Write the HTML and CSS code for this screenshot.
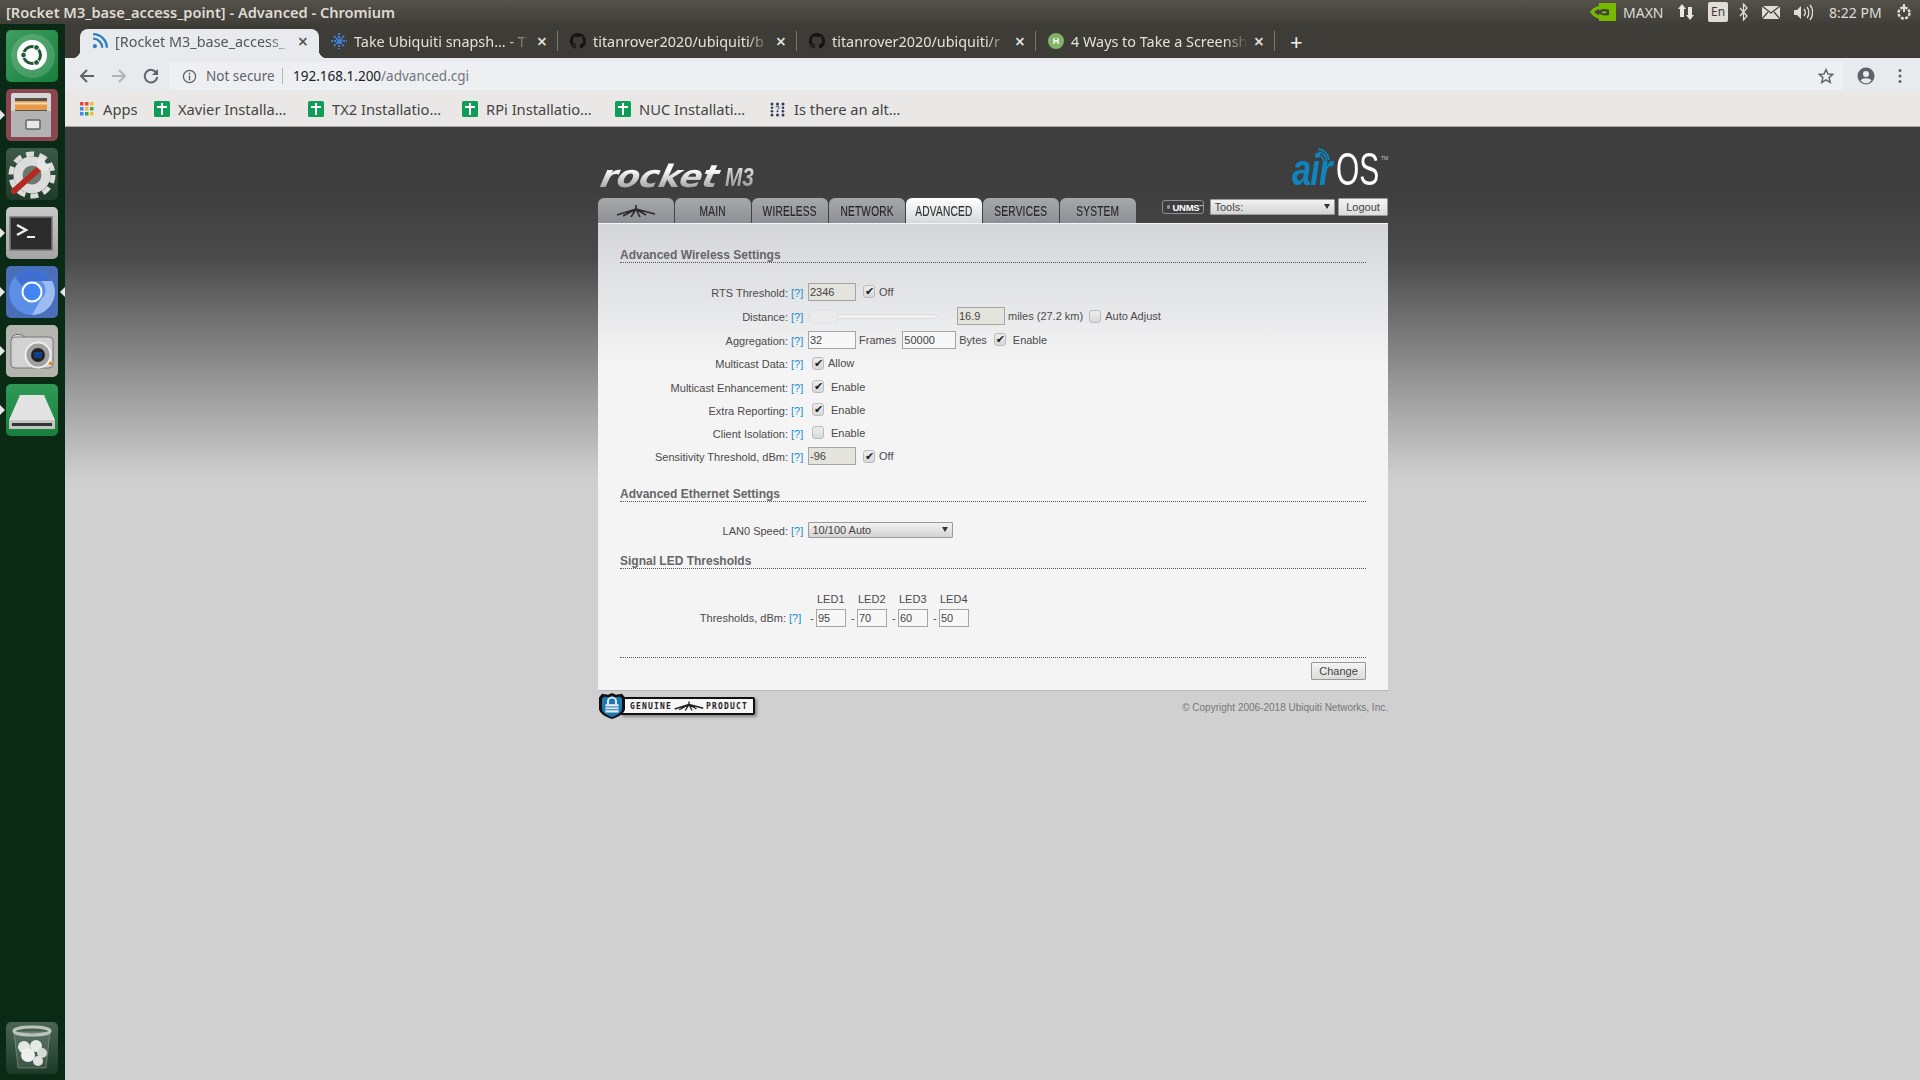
FILE: index.html
```html
<!DOCTYPE html>
<html lang="en">
<head>
    <meta charset="UTF-8">
    <title>[Rocket M3_base_access_point] - Advanced</title>
    <link rel="stylesheet" href="styles.css">
</head>
<body>
    <!-- ubuntu top panel -->
    <div class="panel">
        <div class="win-title">[Rocket M3_base_access_point] - Advanced - Chromium</div>
        <div class="tray">
            <svg class="tray-nv" viewBox="0 0 26 18"><rect x="9" width="17" height="18" fill="#76b900"/><path d="M0 9C4 3 12 1 19 3v3C14 4 8 5 4 9c4 4 9 6 15 4v3C11 18 4 15 0 9z" fill="#76b900"/><path d="M7 9c3-3 8-4 12-2v5c-4 1-9 0-12-3z" fill="#3f3d38"/><path d="M11 9c2-1 5-1 6 0-1 2-4 2-6 0z" fill="#76b900"/></svg>
            <span class="tray-text maxn">MAXN</span>
            <svg class="tray-arrows" viewBox="0 0 18 18"><path d="M5 1l4 5H7v8H3V6H1zM13 17l-4-5h2V4h4v8h2z" fill="#e8e6e0"/></svg>
            <span class="tray-lang">En</span>
            <svg class="tray-bt" viewBox="0 0 9 18"><path d="M1 5l7 8-3.500 4V1L8 5l-7 8" fill="none" stroke="#dfddd6" stroke-width="1.300"/></svg>
            <svg class="tray-mail" viewBox="0 0 18 13"><rect width="18" height="13" fill="#dfddd6"/><path d="M0 0l9 7 9-7M0 13l6-7M18 13l-6-7" fill="none" stroke="#3f3d38" stroke-width="1.200"/></svg>
            <svg class="tray-vol" viewBox="0 0 19 17"><path d="M0 6h3l4-4v13l-4-4H0z" fill="#dfddd6"/><path d="M10 5c1.500 2 1.500 5 0 7M13 3c2.500 3 2.500 8 0 11M16 1c3.500 4 3.500 11 0 15" fill="none" stroke="#dfddd6" stroke-width="1.300"/></svg>
            <span class="tray-text clock">8:22 PM</span>
            <svg class="tray-gear" viewBox="0 0 18 18"><circle cx="9" cy="10" r="5.500" fill="none" stroke="#dfddd6" stroke-width="2.500" stroke-dasharray="3 1.300"/><path d="M9 1v8" stroke="#dfddd6" stroke-width="2"/></svg>
        </div>
    </div>

    <div class="desk">
        <!-- launcher -->
        <nav class="launcher">
            <div class="lnc lnc-ubuntu">
                <svg viewBox="0 0 52 52"><circle cx="27" cy="26" r="22" fill="#ffffff" fill-opacity=".16"/><circle cx="26" cy="25" r="15" fill="#fff"/><circle cx="26" cy="25" r="8.500" fill="none" stroke="#1d5a34" stroke-width="3"/><circle cx="17.500" cy="25" r="2.800" fill="#1d5a34" stroke="#fff"/><circle cx="30.500" cy="17.500" r="2.800" fill="#1d5a34" stroke="#fff"/><circle cx="30.500" cy="32.500" r="2.800" fill="#1d5a34" stroke="#fff"/></svg>
            </div>
            <div class="lnc lnc-files on">
                <svg viewBox="0 0 52 52"><rect x="5" y="4" width="40" height="44" rx="2" fill="#d5d5d5"/><rect x="9" y="9" width="32" height="13" fill="#55524e"/><path d="M9 12h32v9H9z" fill="#e89a4a"/><path d="M9 13.500h32v2H9z" fill="#f6dcae"/><path d="M5 22h40v26H5z" fill="#b3b3b3"/><rect x="20" y="31" width="14" height="9" rx="1" fill="#e8e8e8" stroke="#666" stroke-width="1.500"/></svg>
            </div>
            <div class="lnc lnc-settings">
                <svg viewBox="0 0 52 52"><circle cx="26" cy="27" r="14" fill="#6b7a70" stroke="#dcdcdc" stroke-width="9"/><circle cx="26" cy="27" r="21" fill="none" stroke="#dcdcdc" stroke-width="5" stroke-dasharray="8 5.200"/><path d="M8 43l27-24" stroke="#b52a20" stroke-width="6" stroke-linecap="round"/><path d="M33 21l5-6" stroke="#e6e6e6" stroke-width="6"/><path d="M33 9a9 9 0 0 0 8 14l4-8-6 1-1-6z" fill="#e6e6e6"/></svg>
            </div>
            <div class="lnc lnc-term on">
                <svg viewBox="0 0 52 52"><rect x="4" y="10" width="42" height="33" fill="#2c2c2c" stroke="#777" stroke-width="1.500"/><path d="M11 18l9 5-9 5" fill="none" stroke="#eee" stroke-width="2.500"/><path d="M21 30h8" stroke="#eee" stroke-width="2"/></svg>
            </div>
            <div class="lnc lnc-chrome on both">
                <svg viewBox="0 0 52 52"><circle cx="26" cy="26" r="23" fill="#5b8fe8"/><path d="M26 3a23 23 0 0 1 20 12H26a11 11 0 0 0-10 5L9 11A23 23 0 0 1 26 3z" fill="#3f6fd0"/><path d="M46 15a23 23 0 0 1-20 34l9-16a11 11 0 0 0 0-18z" fill="#9dbdf2"/><circle cx="26" cy="26" r="9.500" fill="#4285f4" stroke="#fff" stroke-width="2"/></svg>
            </div>
            <div class="lnc lnc-camera on">
                <svg viewBox="0 0 52 52"><ellipse cx="12" cy="12" rx="6" ry="2.500" fill="#ddd" stroke="#666"/><rect x="5" y="12" width="42" height="31" rx="4" fill="#d2d2d2" stroke="#777"/><circle cx="32" cy="30" r="12.500" fill="#a0a0a0" stroke="#eee" stroke-width="2"/><circle cx="32" cy="30" r="7" fill="#222"/><rect x="28" y="27" width="8" height="6" fill="#123f8c"/><rect x="43" y="37" width="3" height="3" fill="#e88a1a"/></svg>
            </div>
            <div class="lnc lnc-drive on">
                <svg viewBox="0 0 52 52"><path d="M14 11h24l11 25H3z" fill="#e2e2e2"/><rect x="3" y="36" width="46" height="9" fill="#c4c4c4"/><rect x="6" y="39" width="40" height="3" fill="#333"/></svg>
            </div>
            <div class="lnc lnc-trash">
                <svg viewBox="0 0 52 52"><path d="M8 10l4 36h28l4-36z" fill="#ffffff" fill-opacity=".12" stroke="#ffffff" stroke-opacity=".25"/><ellipse cx="26" cy="9" rx="18" ry="4" fill="none" stroke="#bcc4bd" stroke-width="3"/><circle cx="18" cy="25" r="6" fill="#e4e8e4"/><circle cx="30" cy="24" r="6" fill="#e6eae6"/><circle cx="36" cy="31" r="5" fill="#d5dad5"/><circle cx="22" cy="33" r="7" fill="#eef0ee"/><circle cx="32" cy="39" r="5" fill="#dfe3df"/></svg>
            </div>
        </nav>

        <div class="browser">
            <!-- tab strip -->
            <div class="tabstrip">
                <div class="btab active">
                    <svg class="fav" viewBox="0 0 14 14"><g fill="none" stroke="#2f7fc1" stroke-width="2"><path d="M1 5a8 8 0 0 1 8 8"/><path d="M1 1a12 12 0 0 1 12 12"/></g><circle cx="2.500" cy="11.500" r="1.800" fill="#2f7fc1"/></svg>
                    <span class="btab-title">[Rocket M3_base_access_</span>
                    <span class="btab-x">×</span>
                </div>
                <div class="btab">
                    <svg class="fav" viewBox="0 0 16 16"><path d="M8 0v16M0 8h16M3 3l10 10M13 3L3 13" stroke="#3f7fd6" stroke-width="2.200" stroke-dasharray="2 1"/></svg>
                    <span class="btab-title">Take Ubiquiti snapsh... - T</span>
                    <span class="btab-x">×</span>
                </div>
                <div class="btab">
                    <svg class="fav" viewBox="0 0 16 16"><path fill="#161514" d="M8 0C3.580 0 0 3.580 0 8c0 3.540 2.290 6.530 5.470 7.590.4.070.55-.17.55-.38 0-.19-.01-.82-.01-1.490-2.010.37-2.530-.49-2.690-.94-.09-.23-.48-.94-.82-1.130-.28-.15-.68-.52-.01-.53.63-.01 1.080.58 1.230.82.720 1.210 1.870.87 2.330.66.070-.52.280-.87.510-1.070-1.780-.2-3.640-.89-3.640-3.950 0-.87.310-1.590.820-2.150-.08-.2-.36-1.020.08-2.120 0 0 .67-.21 2.200.82.640-.18 1.320-.27 2-.27s1.360.09 2 .27c1.530-1.040 2.200-.82 2.200-.82.440 1.100.16 1.920.08 2.120.51.56.82 1.270.82 2.150 0 3.070-1.870 3.750-3.650 3.950.29.250.54.730.54 1.480 0 1.070-.01 1.930-.01 2.200 0 .21.150.46.550.38A8.010 8.010 0 0 0 16 8c0-4.420-3.580-8-8-8z"/></svg>
                    <span class="btab-title">titanrover2020/ubiquiti/b</span>
                    <span class="btab-x">×</span>
                </div>
                <div class="btab">
                    <svg class="fav" viewBox="0 0 16 16"><path fill="#161514" d="M8 0C3.580 0 0 3.580 0 8c0 3.540 2.290 6.530 5.470 7.590.4.070.55-.17.55-.38 0-.19-.01-.82-.01-1.490-2.010.37-2.530-.49-2.690-.94-.09-.23-.48-.94-.82-1.130-.28-.15-.68-.52-.01-.53.63-.01 1.080.58 1.230.82.720 1.210 1.870.87 2.330.66.070-.52.280-.87.510-1.070-1.780-.2-3.640-.89-3.640-3.950 0-.87.310-1.590.820-2.150-.08-.2-.36-1.020.08-2.120 0 0 .67-.21 2.200.82.640-.18 1.320-.27 2-.27s1.360.09 2 .27c1.530-1.040 2.200-.82 2.200-.82.440 1.100.16 1.920.08 2.120.51.56.82 1.270.82 2.150 0 3.070-1.870 3.750-3.650 3.950.29.250.54.730.54 1.480 0 1.070-.01 1.930-.01 2.200 0 .21.150.46.550.38A8.010 8.010 0 0 0 16 8c0-4.420-3.580-8-8-8z"/></svg>
                    <span class="btab-title">titanrover2020/ubiquiti/r</span>
                    <span class="btab-x">×</span>
                </div>
                <div class="btab">
                    <svg class="fav" viewBox="0 0 16 16"><circle cx="8" cy="8" r="8" fill="#84b26a"/><path d="M6 5v6M10 5v6M6 8h4" stroke="#fff" stroke-width="1.300"/></svg>
                    <span class="btab-title">4 Ways to Take a Screensh</span>
                    <span class="btab-x">×</span>
                </div>
                <span class="btab-new">+</span>
            </div>

            <!-- address bar -->
            <div class="toolbar">
                <svg class="tb-ico" viewBox="0 0 16 16"><path d="M15 8H2M8 2L2 8l6 6" fill="none" stroke="#5f6368" stroke-width="2"/></svg>
                <svg class="tb-ico" viewBox="0 0 16 16"><path d="M1 8h13M8 2l6 6-6 6" fill="none" stroke="#b0b3b8" stroke-width="2"/></svg>
                <svg class="tb-ico" viewBox="0 0 16 16"><path d="M13.500 5A6.300 6.300 0 1 0 14.300 9" fill="none" stroke="#5f6368" stroke-width="2"/><path d="M15 1v6H9z" fill="#5f6368"/></svg>
                <div class="omni">
                    <svg class="omni-info" viewBox="0 0 16 16"><circle cx="8" cy="8" r="6.500" fill="none" stroke="#5f6368" stroke-width="1.400"/><path d="M8 7v5M8 4v1.800" stroke="#5f6368" stroke-width="1.500"/></svg>
                    <span class="omni-state">Not secure</span>
                    <span class="omni-sep"></span>
                    <span class="omni-url">192.168.1.200<span class="omni-path">/advanced.cgi</span></span>
                    <svg class="omni-star" viewBox="0 0 16 16"><path d="M8 1.500l2 4.500 4.800.4-3.700 3.200 1.200 4.800L8 11.800l-4.300 2.600 1.200-4.800L1.200 6.400 6 6z" fill="none" stroke="#5f6368" stroke-width="1.400"/></svg>
                </div>
                <svg class="tb-acct" viewBox="0 0 18 18"><circle cx="9" cy="9" r="8.500" fill="#5f6368"/><circle cx="9" cy="7" r="3" fill="#e8eaed"/><path d="M3.500 13.500c2-3 9-3 11 0a7 7 0 0 1-11 0z" fill="#e8eaed"/></svg>
                <svg class="tb-menu" viewBox="0 0 4 16"><circle cx="2" cy="2.500" r="1.500" fill="#5f6368"/><circle cx="2" cy="8" r="1.500" fill="#5f6368"/><circle cx="2" cy="13.500" r="1.500" fill="#5f6368"/></svg>
            </div>

            <!-- bookmarks -->
            <div class="bookmarks">
                <div class="bm bm-apps">
                    <svg viewBox="0 0 14 14"><rect width="3.500" height="3.500" fill="#e8453c"/><rect x="5" width="3.500" height="3.500" fill="#e8453c"/><rect x="10" width="3.500" height="3.500" fill="#f9bb2d"/><rect y="5" width="3.500" height="3.500" fill="#4285f4"/><rect x="5" y="5" width="3.500" height="3.500" fill="#f9bb2d"/><rect x="10" y="5" width="3.500" height="3.500" fill="#34a853"/><rect y="10" width="3.500" height="3.500" fill="#4285f4"/><rect x="5" y="10" width="3.500" height="3.500" fill="#34a853"/><rect x="10" y="10" width="3.500" height="3.500" fill="#f9bb2d"/></svg>
                    <span>Apps</span>
                </div>
                <div class="bm bm-xavier"><svg viewBox="0 0 16 16"><rect width="16" height="16" rx="1.500" fill="#0f9d58"/><path d="M3 6h10M8 2v12" stroke="#fff" stroke-width="2"/></svg><span>Xavier Installa…</span></div>
                <div class="bm bm-tx2"><svg viewBox="0 0 16 16"><rect width="16" height="16" rx="1.500" fill="#0f9d58"/><path d="M3 6h10M8 2v12" stroke="#fff" stroke-width="2"/></svg><span>TX2 Installatio…</span></div>
                <div class="bm bm-rpi"><svg viewBox="0 0 16 16"><rect width="16" height="16" rx="1.500" fill="#0f9d58"/><path d="M3 6h10M8 2v12" stroke="#fff" stroke-width="2"/></svg><span>RPi Installatio…</span></div>
                <div class="bm bm-nuc"><svg viewBox="0 0 16 16"><rect width="16" height="16" rx="1.500" fill="#0f9d58"/><path d="M3 6h10M8 2v12" stroke="#fff" stroke-width="2"/></svg><span>NUC Installati…</span></div>
                <div class="bm bm-alt">
                    <svg viewBox="0 0 15 15"><g fill="#2f3c58"><circle cx="2" cy="2" r="1.500"/><circle cx="7.500" cy="2" r="1.500"/><circle cx="13" cy="2" r="1.500"/><circle cx="2" cy="5.700" r="1.300"/><circle cx="13" cy="5.700" r="1.300"/><circle cx="2" cy="9.300" r="1.300"/><circle cx="13" cy="9.300" r="1.300"/><circle cx="7.500" cy="9.300" r="1"/><circle cx="2" cy="13" r="1.500"/><circle cx="7.500" cy="13" r="1.500"/><circle cx="13" cy="13" r="1.500"/></g><path d="M6 5.500a1.500 1.500 0 1 1 1.500 1.500" fill="none" stroke="#2f3c58"/></svg>
                    <span>Is there an alt…</span>
                </div>
            </div>

            <!-- airOS page -->
            <main class="page">
                <div class="wrap">
                    <header class="brand">
                        <div class="brand-rocket"><span class="rocket">rocket</span><span class="rocket-m3">M3</span></div>
                        <div class="brand-air"><span class="air">air</span><svg class="air-wave" viewBox="0 0 12 13"><g fill="none" stroke="#0d86c0" stroke-width="1.500"><path d="M1 7a5 5 0 0 1 5 5"/><path d="M1 4a8 8 0 0 1 8 8"/><path d="M1 1a11 11 0 0 1 10 10"/></g></svg><span class="os">OS</span><span class="tm">TM</span></div>
                    </header>

                    <div class="nav">
                        <ul class="tabs">
                            <li class="tab tab-logo"><svg viewBox="0 0 40 12"><path d="M20 4L1 10M20 4l-13 7M20 4l-5 8M20 4l4 8M20 4l10 6M20 4l19 5M20 0v6" fill="none" stroke="#2b2b2b" stroke-width="1.600"/></svg></li>
                            <li class="tab"><span>MAIN</span></li>
                            <li class="tab"><span>WIRELESS</span></li>
                            <li class="tab"><span>NETWORK</span></li>
                            <li class="tab current"><span>ADVANCED</span></li>
                            <li class="tab"><span>SERVICES</span></li>
                            <li class="tab"><span>SYSTEM</span></li>
                        </ul>
                        <div class="nav-tools">
                            <span class="unms"><i></i>UNMS<sup>™</sup></span>
                            <span class="sel sel-tools"><select><option>Tools:</option></select></span>
                            <button class="btn btn-logout">Logout</button>
                        </div>
                    </div>

                    <div class="content">
                        <h3 class="sec sec-first">Advanced Wireless Settings</h3>

                        <div class="rows">
                            <div class="row r25">
                                <label class="lab">RTS Threshold:</label><a class="help">[?]</a>
                                <input class="txt off w48" value="2346" readonly>
                                <input class="cb cb-after" type="checkbox" checked><span class="nt">Off</span>
                            </div>
                            <div class="row r24">
                                <label class="lab">Distance:</label><a class="help">[?]</a>
                                <div class="slider"><span class="knob"></span></div>
                                <input class="txt off w48" value="16.9" readonly>
                                <span class="miles">miles (27.2 km)</span>
                                <input class="cb cb-auto" type="checkbox"><span class="nt">Auto Adjust</span>
                            </div>
                            <div class="row r23">
                                <label class="lab">Aggregation:</label><a class="help">[?]</a>
                                <input class="txt w48" value="32">
                                <span class="frames">Frames</span>
                                <input class="txt w54" value="50000">
                                <span class="bytes">Bytes</span>
                                <input class="cb cb-agg" type="checkbox" checked><span class="nt2">Enable</span>
                            </div>
                            <div class="row r24">
                                <label class="lab">Multicast Data:</label><a class="help">[?]</a>
                                <input class="cb" type="checkbox" checked><span class="nt">Allow</span>
                            </div>
                            <div class="row r23">
                                <label class="lab">Multicast Enhancement:</label><a class="help">[?]</a>
                                <input class="cb" type="checkbox" checked><span class="nt2">Enable</span>
                            </div>
                            <div class="row r23">
                                <label class="lab">Extra Reporting:</label><a class="help">[?]</a>
                                <input class="cb" type="checkbox" checked><span class="nt2">Enable</span>
                            </div>
                            <div class="row r23">
                                <label class="lab">Client Isolation:</label><a class="help">[?]</a>
                                <input class="cb" type="checkbox"><span class="nt2">Enable</span>
                            </div>
                            <div class="row r24">
                                <label class="lab">Sensitivity Threshold, dBm:</label><a class="help">[?]</a>
                                <input class="txt off w48" value="-96" readonly>
                                <input class="cb cb-after" type="checkbox" checked><span class="nt">Off</span>
                            </div>
                        </div>

                        <h3 class="sec sec-eth">Advanced Ethernet Settings</h3>
                        <div class="row r24 lan">
                            <label class="lab">LAN0 Speed:</label><a class="help">[?]</a>
                            <span class="sel sel-lan"><select><option>10/100 Auto</option></select></span>
                        </div>

                        <h3 class="sec sec-led">Signal LED Thresholds</h3>
                        <div class="led-head">
                            <span>LED1</span><span>LED2</span><span>LED3</span><span>LED4</span>
                        </div>
                        <div class="row led-row">
                            <label class="lab lab-led">Thresholds, dBm:</label><a class="help">[?]</a>
                            <div class="led-cell"><span>-</span><input class="txt" value="95"></div>
                            <div class="led-cell"><span>-</span><input class="txt" value="70"></div>
                            <div class="led-cell"><span>-</span><input class="txt" value="60"></div>
                            <div class="led-cell"><span>-</span><input class="txt" value="50"></div>
                        </div>

                        <div class="actions">
                            <button class="btn btn-change">Change</button>
                        </div>
                    </div>

                    <footer class="foot">
                        <div class="genuine">
                            <svg class="shield" viewBox="0 0 28 30" preserveAspectRatio="none"><path d="M14 1l4 2 6-1 3 4v12c0 5-7 9-13 11C8 27 1 23 1 18V6l3-4 6 1z" fill="#111"/><path d="M14 4l3 1.500 5-.5 2 2v11c0 4-5 7-10 9-5-2-10-5-10-9V7l2-2 5 .5z" fill="#1f77b0"/><path d="M10 13V10a4 4 0 0 1 8 0v3" fill="none" stroke="#dfeaf2" stroke-width="2"/><rect x="7.500" y="13" width="13" height="9" fill="#dfeaf2"/><path d="M7.500 16h13M7.500 19h13" stroke="#1f77b0"/></svg>
                            <div class="genuine-pill">
                                <span>GENUINE</span>
                                <svg viewBox="0 0 40 12"><path d="M20 4L1 10M20 4l-13 7M20 4l-5 8M20 4l4 8M20 4l10 6M20 4l19 5M20 0v6" fill="none" stroke="#222" stroke-width="1.800"/></svg>
                                <span>PRODUCT</span>
                            </div>
                        </div>
                        <div class="copy">© Copyright 2006-2018 Ubiquiti Networks, Inc.</div>
                    </footer>
                </div>
            </main>
        </div>
    </div>
</body>
</html>
```

FILE: styles.css
```css
* {
    box-sizing: border-box;
}
html, body {
    margin: 0;
    padding: 0;
}
body {
    width: 1920px;
    height: 1080px;
    overflow: hidden;
    display: flex;
    flex-direction: column;
    font-family: "Noto Sans", sans-serif;
    background: #d0d0d0;
}

/* top panel */
.panel {
    height: 24px;
    flex: none;
    display: flex;
    align-items: center;
    justify-content: space-between;
    background: linear-gradient(#55524a, #3f3e39);
    color: #dfdbd2;
}
.win-title {
    padding-left: 6px;
    font-size: 14.6px;
    font-weight: 600;
    white-space: nowrap;
}
.tray {
    display: flex;
    align-items: center;
    height: 24px;
}
.tray svg {
    flex: none;
    display: block;
}
.tray-text {
    font-size: 14px;
    color: #dfddd6;
}
.tray-nv { width: 26px; height: 18px; margin-right: 7px; }
.maxn { width: 41px; margin-right: 13px; }
.tray-arrows { width: 18px; height: 18px; margin-right: 13px; }
.tray-lang {
    width: 20px;
    height: 20px;
    margin-right: 11px;
    background: #dfddd6;
    border-radius: 2px;
    color: #3c3b37;
    font-size: 12px;
    line-height: 20px;
    text-align: center;
}
.tray-bt { width: 9px; height: 18px; margin-right: 14px; }
.tray-mail { width: 18px; height: 13px; margin-right: 14px; }
.tray-vol { width: 19px; height: 17px; margin-right: 16px; }
.clock { width: 53px; margin-right: 13px; white-space: nowrap; }
.tray-gear { width: 18px; height: 18px; margin-right: 7px; }

.desk {
    flex: 1;
    display: flex;
    min-height: 0;
}

/* launcher */
.launcher {
    width: 65px;
    flex: none;
    display: flex;
    flex-direction: column;
    gap: 7px;
    padding: 6px 7px 6px 6px;
    background: #0a2a16;
}
.lnc {
    position: relative;
    width: 52px;
    height: 52px;
    flex: none;
    border-radius: 5px;
}
.lnc svg {
    display: block;
    width: 52px;
    height: 52px;
}
.lnc.on::before {
    content: "";
    position: absolute;
    left: -6px;
    top: 21px;
    border: 5px solid transparent;
    border-left: 5px solid #e6e6e6;
}
.lnc.both::after {
    content: "";
    position: absolute;
    right: -7px;
    top: 21px;
    border: 5px solid transparent;
    border-right: 5px solid #e6e6e6;
}
.lnc-ubuntu { background: linear-gradient(135deg, #3f9d5e, #17813e); }
.lnc-files { background: #8a464e; }
.lnc-settings { background: linear-gradient(#3c5a48, #1f3b2a); }
.lnc-term { background: linear-gradient(#c8c8c8, #a5a5a5); }
.lnc-chrome { background: #4a6fb8; }
.lnc-camera { background: #b5b5b0; }
.lnc-drive { background: linear-gradient(#2f9a55, #16803c); }
.lnc-trash {
    margin-top: auto;
    background: linear-gradient(#4a6554, #1d3a28);
}

/* browser chrome */
.browser {
    flex: 1;
    min-width: 0;
    display: flex;
    flex-direction: column;
}
.tabstrip {
    height: 34px;
    flex: none;
    display: flex;
    padding: 5px 0 0 15px;
    background: #3d3c37;
}
.btab {
    position: relative;
    width: 239px;
    flex: none;
    display: flex;
    align-items: center;
    padding: 0 7px 5px 12px;
    color: #e2e1dd;
    font-size: 14.4px;
}
.btab::after {
    content: "";
    position: absolute;
    right: 0;
    top: 2px;
    height: 20px;
    width: 1px;
    background: #77766f;
}
.btab.active {
    background: #e8eaed;
    border-radius: 8px 8px 0 0;
    color: #555;
}
.btab.active::before,
.btab.active::after {
    content: "";
    position: absolute;
    top: auto;
    bottom: 0;
    width: 8px;
    height: 8px;
}
.btab.active::before {
    left: -8px;
    background: radial-gradient(circle at 0 0, transparent 8px, #e8eaed 8.5px);
}
.btab.active::after {
    right: -8px;
    background: radial-gradient(circle at 100% 0, transparent 8px, #e8eaed 8.5px);
}
.fav {
    width: 16px;
    height: 16px;
    flex: none;
    margin-right: 7px;
}
.btab-title {
    flex: 1;
    overflow: hidden;
    white-space: nowrap;
    -webkit-mask-image: linear-gradient(90deg, #000 86%, transparent 99%);
    mask-image: linear-gradient(90deg, #000 86%, transparent 99%);
}
.btab-x {
    width: 18px;
    flex: none;
    text-align: center;
    font-size: 18px;
    font-weight: 600;
    line-height: 18px;
}
.btab-new {
    margin: 0 0 0 15px;
    color: #eee;
    font-size: 22px;
    line-height: 24px;
}
.toolbar {
    height: 32px;
    flex: none;
    display: flex;
    align-items: center;
    padding: 4px 0 0 14px;
    background: #e8eaed;
}
.tb-ico {
    width: 16px;
    height: 16px;
    flex: none;
    margin-right: 16px;
}
.omni {
    width: 1674px;
    height: 28px;
    flex: none;
    margin-left: -6px;
    display: flex;
    align-items: center;
    padding-left: 13px;
    background: #edeff2;
    font-size: 13.5px;
}
.omni-info { width: 15px; height: 15px; margin-right: 9px; }
.omni-state { width: 76px; color: #5f6368; white-space: nowrap; }
.omni-sep { width: 1px; height: 16px; background: #b5b7ba; margin-right: 10px; }
.omni-url { color: #202124; white-space: nowrap; }
.omni-path { color: #70757a; }
.omni-star { width: 16px; height: 16px; margin-left: auto; margin-right: 9px; }
.tb-acct { width: 18px; height: 18px; margin-left: 14px; flex: none; }
.tb-menu { width: 4px; height: 16px; margin-left: 23px; flex: none; }

.bookmarks {
    height: 37px;
    flex: none;
    display: flex;
    align-items: center;
    padding: 2px 0 0 15px;
    background: #e9e8e6;
    color: #444;
    font-size: 14.7px;
    border-bottom: 1px solid #a8a8a8;
}
.bm {
    display: flex;
    align-items: center;
    white-space: nowrap;
}
.bm svg {
    width: 16px;
    height: 16px;
    flex: none;
    margin-right: 8px;
}
.bm-apps { width: 74px; }
.bm-apps svg { width: 14px; height: 14px; margin-right: 9px; }
.bm-xavier { width: 154px; }
.bm-tx2 { width: 154px; }
.bm-rpi { width: 153px; }
.bm-nuc { width: 155px; }
.bm-alt svg { width: 15px; height: 15px; margin-right: 9px; }

/* airOS page */
.page {
    flex: 1;
    min-height: 0;
    background: linear-gradient(#3e3e3e 60px, #4a4a4a 131px, #747474 198px, #b0b0b0 298px, #cdcdcd 348px, #d0d0d0 363px);
    font-family: "Liberation Sans", Arial, sans-serif;
    font-size: 11px;
    color: #4a4a4a;
}
.wrap {
    width: 790px;
    margin-left: 533px;
}
.brand {
    height: 71px;
    display: flex;
    justify-content: space-between;
    align-items: flex-end;
    padding-bottom: 10px;
}
.brand-rocket {
    display: flex;
    align-items: flex-end;
}
.rocket {
    display: block;
    width: 123px;
    margin-bottom: -2px;
    font-family: "DejaVu Sans", sans-serif;
    font-weight: 700;
    font-style: italic;
    font-size: 31px;
    line-height: 28px;
    letter-spacing: -0.3px;
    background: linear-gradient(#fafafa 30%, #9a9a9a);
    -webkit-background-clip: text;
    background-clip: text;
    color: transparent;
    transform: scaleX(1.08) skewX(-12deg);
    transform-origin: left bottom;
}
.rocket-m3 {
    display: block;
    margin-left: 4px;
    font-style: italic;
    font-weight: 700;
    font-size: 26px;
    line-height: 22px;
    background: linear-gradient(#e2e2e2, #9a9a9a);
    -webkit-background-clip: text;
    background-clip: text;
    color: transparent;
    transform: scaleX(.8);
    transform-origin: left bottom;
}
.brand-air {
    position: relative;
    display: flex;
    align-items: flex-end;
    height: 40px;
    color: #fff;
}
.air {
    display: block;
    width: 44px;
    font-style: italic;
    font-weight: 700;
    font-size: 44px;
    line-height: 36px;
    color: #0d86c0;
    letter-spacing: -1px;
    transform: scaleX(.78);
    transform-origin: left bottom;
}
.air-wave {
    position: absolute;
    left: 25px;
    top: 0;
    width: 13px;
    height: 14px;
}
.os {
    display: block;
    width: 45px;
    font-size: 46px;
    line-height: 38px;
    transform: scaleX(.65);
    transform-origin: left bottom;
}
.tm {
    width: 7px;
    align-self: flex-start;
    margin-top: 7px;
    font-size: 5px;
    color: #ccc;
}

/* tabs */
.nav {
    height: 25px;
    display: flex;
    justify-content: space-between;
}
.tabs {
    list-style: none;
    margin: 0;
    padding: 0;
    display: flex;
    gap: 1px;
}
.tab {
    width: 76px;
    display: flex;
    align-items: center;
    justify-content: center;
    border-radius: 6px 6px 0 0;
    background: linear-gradient(#a8a8a8, #8c8f96);
    color: #262626;
    text-shadow: 0 1px 0 rgba(255, 255, 255, .15);
}
.tab span {
    display: block;
    font-size: 14.5px;
    letter-spacing: .3px;
    white-space: nowrap;
    -webkit-text-stroke: .2px;
    transform: scaleX(.7);
}
.tab.current {
    background: linear-gradient(#fff, #d6d8dc);
    color: #333;
}
.tab-logo svg {
    width: 40px;
    height: 12px;
}
.nav-tools {
    display: flex;
    align-items: flex-start;
    gap: 3px;
}
.unms {
    display: flex;
    align-items: center;
    width: 42px;
    height: 14px;
    margin: 2px 3px 0 0;
    padding-left: 4px;
    border: 1px solid #8f8f8f;
    border-radius: 3px;
    background: #3e3e3e;
    color: #fff;
    font-weight: 700;
    font-size: 9.5px;
    letter-spacing: -.3px;
}
.unms i {
    width: 4px;
    height: 4px;
    margin-right: 3px;
    border-radius: 50%;
    background: #999;
}
.unms sup {
    font-size: 4px;
    line-height: 0;
}
.sel {
    position: relative;
    display: block;
}
.sel::after {
    content: "";
    position: absolute;
    right: 5px;
    top: 5px;
    border: 3px solid transparent;
    border-top: 5px solid #333;
    border-bottom: 0;
}
.sel select {
    display: block;
    width: 100%;
    height: 100%;
    appearance: none;
    -webkit-appearance: none;
    padding: 0 3.5px;
    border: 1px solid #9a9a9a;
    border-radius: 1px;
    background: linear-gradient(#f2f2f2, #d4d4d4);
    font: 11px "Liberation Sans", Arial, sans-serif;
    color: #444;
}
.sel-tools {
    width: 125px;
    height: 16px;
    margin-top: 1px;
}
.btn {
    display: block;
    padding: 0;
    border: 1px solid #999;
    border-radius: 1px;
    background: linear-gradient(#f4f4f4, #dcdcdc);
    font: 11px "Liberation Sans", Arial, sans-serif;
    color: #444;
}
.btn-logout {
    width: 50px;
    height: 18px;
}

/* main panel */
.content {
    height: 468px;
    padding: 0 22px;
    border-top: 1px solid #f5f5f5;
    border-bottom: 1px solid #b9b9b9;
    background: linear-gradient(#d4d6da, #f4f4f4 142px);
}
.sec {
    margin: 0;
    height: 15px;
    line-height: 14px;
    border-bottom: 1px dotted #555;
    font-size: 12px;
    font-weight: 700;
    color: #666;
}
.sec-first { margin-top: 24px; }
.sec-eth { margin-top: 19px; }
.sec-led { margin-top: 12px; }

.rows {
    margin-top: 16px;
}
.row {
    display: flex;
    align-items: center;
}
.r23 { height: 23px; }
.r24 { height: 24px; }
.r25 { height: 25px; }
.lab {
    width: 168px;
    flex: none;
    margin-top: 2px;
    text-align: right;
    white-space: nowrap;
}
.help {
    width: 12px;
    flex: none;
    margin: 2px 5px 0 3px;
    color: #1a8fd0;
    white-space: nowrap;
}
.txt {
    display: block;
    height: 18px;
    flex: none;
    margin: 0;
    padding: 0 1px;
    border: 1px solid #a5a5a5;
    background: #f7f7f7;
    font: 11px "Liberation Sans", Arial, sans-serif;
    color: #444;
    outline: none;
}
.txt.off {
    background: #e4e3dc;
}
.w48 { width: 48px; }
.w54 { width: 54px; }
.cb {
    position: relative;
    width: 12px;
    height: 13px;
    flex: none;
    margin: 0 4px;
    appearance: none;
    -webkit-appearance: none;
    border: 1px solid #bbb;
    border-radius: 3px;
    background: linear-gradient(#eee, #d8d8d8);
}
.cb:checked::after {
    content: "✔";
    position: absolute;
    left: 1px;
    top: 0;
    font: 700 11px/11px "DejaVu Sans", sans-serif;
    color: #222;
}
.cb-after { margin-left: 7px; }
.cb-auto { margin-left: 6px; }
.cb-agg { margin-left: 7px; }
.nt, .miles, .frames, .bytes, .nt2 {
    white-space: nowrap;
}
.nt2 { margin-left: 3px; }
.slider {
    position: relative;
    width: 129px;
    height: 5px;
    flex: none;
    margin: 0 20px 0 0;
    border: 1px solid #ddd;
    border-radius: 3px;
    background: #f0f0f0;
}
.knob {
    position: absolute;
    left: 0;
    top: -6px;
    width: 29px;
    height: 15px;
    border: 1px solid #e2e2e2;
    border-radius: 4px;
    background: #eaeaea;
}
.miles { margin-left: 3px; }
.frames { margin: 0 6px 0 3px; }
.bytes { margin-left: 3px; }
.lan { margin-top: 16px; }
.sel-lan {
    width: 145px;
    height: 16px;
}
.led-head {
    display: flex;
    height: 14px;
    margin: 23px 0 2px;
    padding-left: 197px;
    line-height: 14px;
}
.led-head span {
    width: 41px;
    flex: none;
}
.led-row {
    height: 20px;
}
.lab-led {
    width: 166px;
}
.led-row .lab,
.led-row .help {
    margin-top: 0;
}
.led-row .help {
    margin-right: 7px;
}
.led-cell {
    width: 38px;
    flex: none;
    display: flex;
    align-items: center;
    justify-content: space-between;
    margin-right: 3px;
    padding-left: 2px;
}
.led-cell .txt {
    width: 30px;
}
.actions {
    margin-top: 29px;
    padding-top: 4px;
    border-top: 1px dotted #555;
    display: flex;
    justify-content: flex-end;
}
.btn-change {
    width: 55px;
    height: 18px;
}

/* footer */
.foot {
    display: flex;
    justify-content: space-between;
    align-items: center;
    height: 32px;
}
.genuine {
    display: flex;
    align-items: center;
    align-self: flex-start;
    height: 28px;
    margin-top: 1px;
}
.shield {
    position: relative;
    z-index: 1;
    width: 28px;
    height: 28px;
    flex: none;
}
.genuine-pill {
    display: flex;
    align-items: center;
    justify-content: space-between;
    width: 135px;
    height: 18px;
    margin-left: -6px;
    padding: 0 5px 0 8px;
    border: 2px solid #111;
    border-radius: 2px;
    background: #f6f6f6;
    box-shadow: 2px 2px 3px rgba(0, 0, 0, .35);
    font: 700 8px "DejaVu Sans Mono", monospace;
    letter-spacing: 1.2px;
    color: #222;
}
.genuine-pill svg {
    width: 30px;
    height: 10px;
}
.copy {
    font-size: 10px;
    color: #777;
}
```
